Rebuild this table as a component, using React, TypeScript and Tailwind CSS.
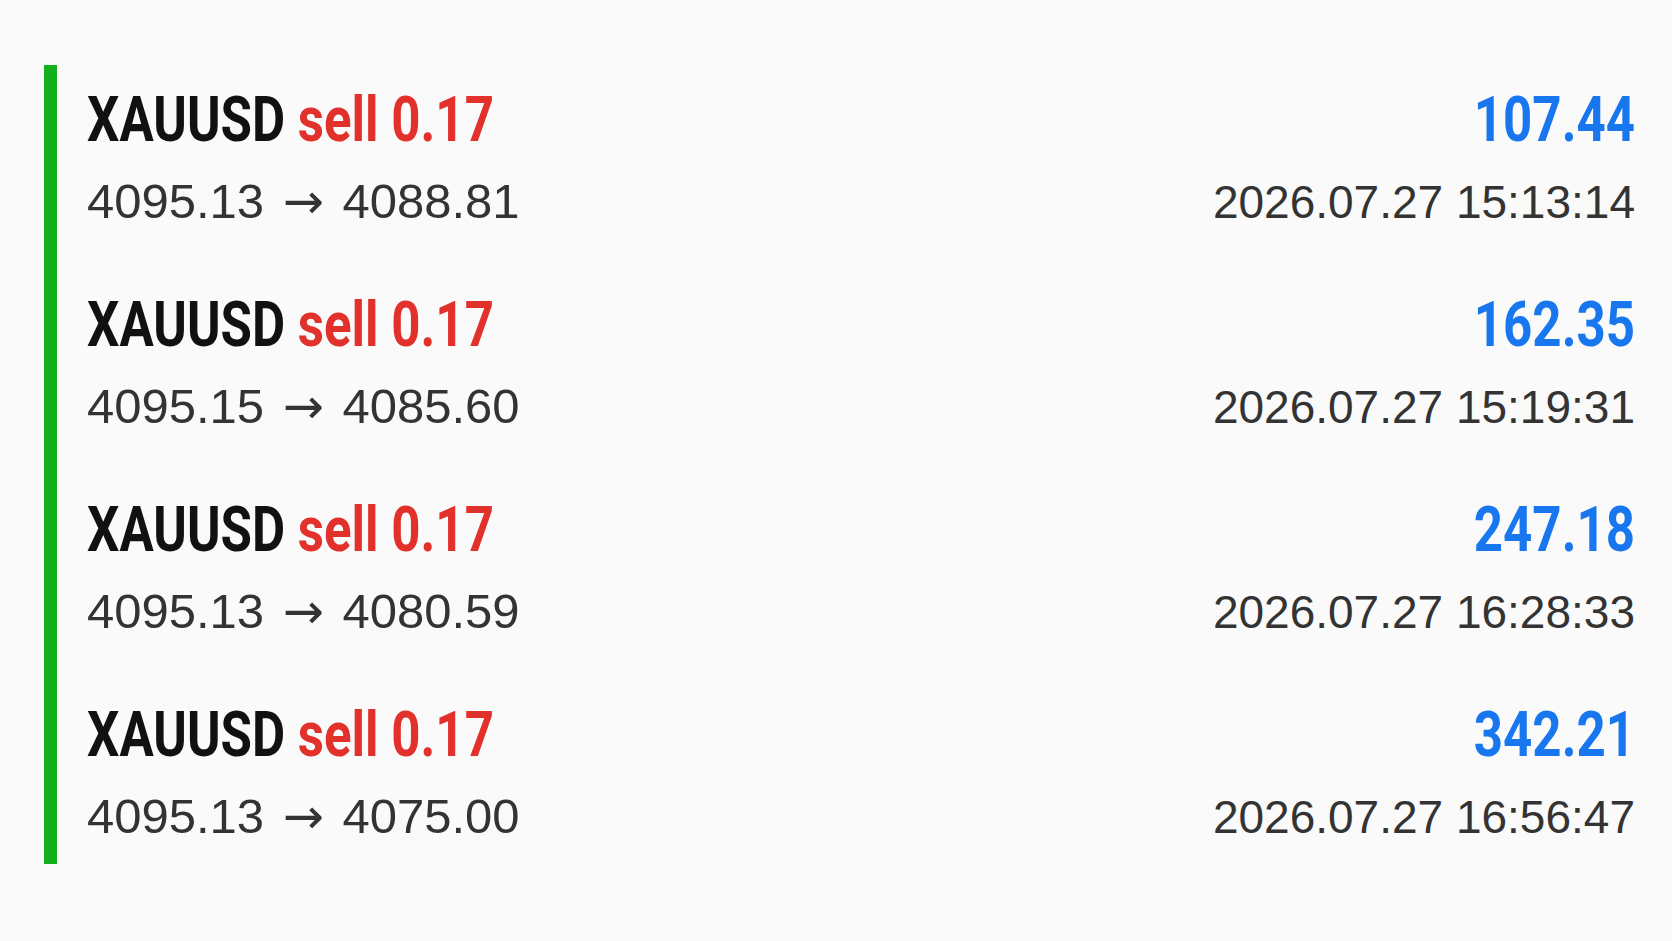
import React from 'react';

interface Trade {
  symbol: string;
  side: string;
  volume: string;
  open: string;
  close: string;
  profit: string;
  time: string;
}

const trades: Trade[] = [
  { symbol: 'XAUUSD', side: 'sell', volume: '0.17', open: '4095.13', close: '4088.81', profit: '107.44', time: '2026.07.27 15:13:14' },
  { symbol: 'XAUUSD', side: 'sell', volume: '0.17', open: '4095.15', close: '4085.60', profit: '162.35', time: '2026.07.27 15:19:31' },
  { symbol: 'XAUUSD', side: 'sell', volume: '0.17', open: '4095.13', close: '4080.59', profit: '247.18', time: '2026.07.27 16:28:33' },
  { symbol: 'XAUUSD', side: 'sell', volume: '0.17', open: '4095.13', close: '4075.00', profit: '342.21', time: '2026.07.27 16:56:47' },
];

const titleFont = { fontFamily: 'Roboto, "Liberation Sans", sans-serif' };
const bodyFont = { fontFamily: '"Liberation Sans", Arial, sans-serif' };
const arrowFont = { fontFamily: '"DejaVu Sans", sans-serif' };

export default function App() {
  return (
    <div className="w-[1672px] h-[941px] bg-[#fafafa] pt-[65px] pl-[44px] pr-[37px]">
      <div className="border-l-[13px] border-[#12b01c] pl-[30px] pt-[24px] pb-[24px] flex flex-col gap-[69.5px]">
        {trades.map((t, i) => (
          <div key={i} className="flex flex-col gap-[26.5px]">
            <div className="flex justify-between items-baseline text-[63px] leading-[62px] font-bold" style={titleFont}>
              <div className="origin-left scale-x-[0.81] whitespace-nowrap">
                <span className="text-[#111111]">{t.symbol}</span>{' '}
                <span className="text-[#e2302a]">{t.side} {t.volume}</span>
              </div>
              <span className="origin-right scale-x-[0.81] text-[#1877ee]">{t.profit}</span>
            </div>
            <div className="flex justify-between items-baseline text-[46px] leading-[46px] text-[#333333]" style={bodyFont}>
              <span className="text-[49px]">
                {t.open} <span className="mx-[5px]" style={arrowFont}>→</span> {t.close}
              </span>
              <span>{t.time}</span>
            </div>
          </div>
        ))}
      </div>
    </div>
  );
}
